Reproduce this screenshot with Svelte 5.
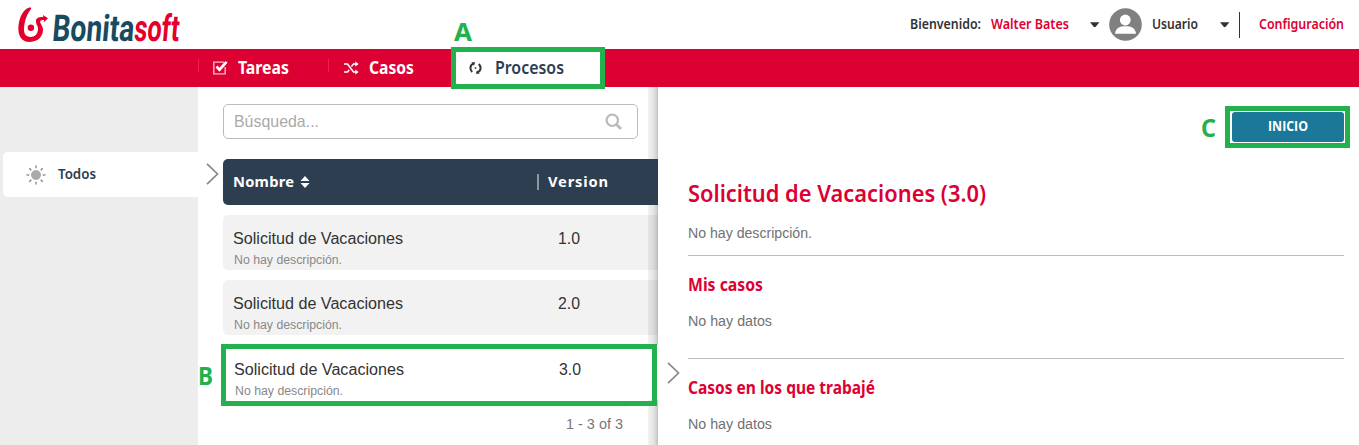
<script>
  const rows = [
    { name: 'Solicitud de Vacaciones', note: 'No hay descripción.', version: '1.0' },
    { name: 'Solicitud de Vacaciones', note: 'No hay descripción.', version: '2.0' },
    { name: 'Solicitud de Vacaciones', note: 'No hay descripción.', version: '3.0', selected: true }
  ];
  const rays = [0, 45, 90, 135, 180, 225, 270, 315];
</script>

{#snippet label(text, width, size, kind = 'sig', adjust = 'spacingAndGlyphs')}
  <svg class="label {kind}" {width} height="20"><text x="0" y="15" font-size={size} textLength={width} lengthAdjust={adjust}>{text}</text></svg>
{/snippet}

{#snippet chevron()}
  <svg class="chevron" width="13" height="22" viewBox="0 0 13 22"><path d="M1 .8 11.5 11 1 21.2" fill="none" stroke="#888" stroke-width="1.7" /></svg>
{/snippet}

{#snippet caret()}
  <svg class="caret" width="10" height="6" viewBox="0 0 10 6"><path d="M0 .3H9.4L5.7 4.8Q4.7 5.7 3.7 4.8Z" fill="#333" /></svg>
{/snippet}

<div class="page">
  <header>
    <svg class="logo" width="190" height="49" viewBox="0 0 190 49">
      <path d="M12.6 7.3C7.5 8 3.5 13 1.4 20.4C-1.2 31 1 41.6 11.2 41.9C20.2 42.1 25 36.5 25 29.6C25 25.3 21.7 23.4 22.2 21.4C22.6 19.8 24.5 20.1 26 20L25.7 22.5L30 18.2L24.9 14.9L25.3 17.1C21 16.9 17.6 18.2 17.9 21.6C18.2 25 20.5 26.2 20 30C19.4 34.6 16.3 37 12.3 36.9C5.8 36.7 5.3 31.1 6.6 23.5C7.8 17 10.3 12.3 13.2 8.7Z" fill="#e4002b" />
      <circle cx="12.9" cy="27.8" r="3.2" fill="#e4002b" />
      <g class="wordmark" transform="translate(33.5 41) skewX(-5)">
        <text x="0" y="0" font-size="37" textLength="82" lengthAdjust="spacingAndGlyphs" fill="#184a62">Bonita</text>
        <text x="82" y="0" font-size="37" textLength="45" lengthAdjust="spacingAndGlyphs" fill="#e4002b">soft</text>
      </g>
    </svg>
    <div class="user">
      {@render label('Bienvenido:', 71, 14)}
      <span class="red name">{@render label('Walter Bates', 78, 14)}</span>
      {@render caret()}
      <svg class="avatar" width="33" height="33" viewBox="0 0 33 33">
        <circle cx="16.5" cy="16.5" r="16.3" fill="#808080" />
        <circle cx="16.3" cy="12" r="5.4" fill="#fff" />
        <path d="M6 25.7C6.5 20 11 18.2 16.5 18.2S26.5 20 27 25.7Z" fill="#fff" />
      </svg>
      <span class="role">{@render label('Usuario', 46, 14)}</span>
      {@render caret()}
      <span class="divider"></span>
      <span class="red">{@render label('Configuración', 85, 14)}</span>
    </div>
  </header>

  <nav>
    <div class="tab tasks">
      <svg width="17" height="16" viewBox="0 0 17 16"><path d="M12 2.1H1.8V13.9H13.2V7" fill="none" stroke="#f8b9c7" stroke-width="1.4" /><path d="M4.5 6.5 7.5 9.7 14.6 1.8" fill="none" stroke="#fff" stroke-width="2.7" /></svg>
      {@render label('Tareas', 51, 17, 'sig bold')}
    </div>
    <div class="tab cases">
      <svg width="15" height="14" viewBox="0 0 15 14"><path d="M0 3H3.5L9.5 11H13M0 11H3.5L5.3 8.8M7.4 5.4 9.5 3H13" fill="none" stroke="#fff" stroke-width="1.5" /><path d="M11.3.4 14.7 3 11.3 5.6ZM11.3 8.4 14.7 11 11.3 13.6Z" fill="#fff" /></svg>
      {@render label('Casos', 45, 17, 'sig bold')}
    </div>
    <div class="tab active">
      <svg width="13" height="14" viewBox="0 0 13 14"><path d="M4 2.6C.6 4.6.8 8.6 3.2 11M9 11.4C12.4 9.4 12.2 5.4 9.8 3" fill="none" stroke="#333" stroke-width="2" /><path d="M2.4 1.2 6.2 1.3 5 4.8ZM10.6 12.8 6.8 12.7 8 9.2Z" fill="#333" /><circle cx="6.5" cy="7" r="1" fill="#555" /></svg>
      {@render label('Procesos', 69, 17)}
    </div>
  </nav>

  <main>
    <aside>
      <div class="filter">
        <svg width="20" height="20" viewBox="-10 -10 20 20">
          <circle r="4.6" fill="#aaa" stroke="#999" stroke-width=".6" />
          {#each rays as angle}<path d="M0-9.5V-6.7" stroke="#777" stroke-width="1.2" transform="rotate({angle})" />{/each}
        </svg>
        {@render label('Todos', 38, 14)}
      </div>
    </aside>

    <section class="list">
      <div class="side-arrow">{@render chevron()}</div>
      <div class="shade"></div>
      <div class="search">
        {@render label('Búsqueda...', 85, 16.5, 'plain')}
        <svg width="18" height="18" viewBox="0 0 18 18"><circle cx="7.3" cy="7.3" r="5.7" fill="none" stroke="#bbb" stroke-width="2.2" /><path d="M11.5 11.5 16 16" stroke="#bbb" stroke-width="2.8" /></svg>
      </div>
      <div class="thead">
        {@render label('Nombre', 61, 14.7, 'sig bold', 'spacing')}
        <svg class="sort" width="10" height="12" viewBox="0 0 10 12"><path d="M5 0 9.5 5H.5ZM5 12 9.5 7H.5Z" fill="#fff" /></svg>
        <span class="bar"></span>
        {@render label('Version', 60, 14.7, 'sig bold', 'spacing')}
      </div>
      <div class="rows">
        {#each rows as row}
          <div class="row" class:selected={row.selected}>
            <div class="texts">
              {@render label(row.name, 170, 16, 'plain')}
              <span class="note">{@render label(row.note, 108, 12, 'plain')}</span>
            </div>
            {@render label(row.version, 22, 16, 'plain')}
          </div>
        {/each}
      </div>
      <div class="count">{@render label('1 - 3 of 3', 57, 14, 'plain')}</div>
    </section>

    <section class="detail">
      <div class="detail-arrow">{@render chevron()}</div>
      <button>{@render label('INICIO', 40, 13.5, 'sig bold open')}</button>
      <h1>{@render label('Solicitud de Vacaciones (3.0)', 298, 23)}</h1>
      <p class="desc">{@render label('No hay descripción.', 124, 14, 'plain')}</p>
      <div class="block">
        <h2>{@render label('Mis casos', 75, 17, 'sig bold')}</h2>
        <p>{@render label('No hay datos', 84, 14, 'plain')}</p>
      </div>
      <div class="block">
        <h2>{@render label('Casos en los que trabajé', 187, 17, 'sig bold')}</h2>
        <p>{@render label('No hay datos', 84, 14, 'plain')}</p>
      </div>
    </section>
  </main>

  <div class="frame frame-a"></div>
  <div class="frame frame-b"></div>
  <div class="frame frame-c"></div>
  <div class="mark mark-a">{@render label('A', 18, 25, 'sig bold')}</div>
  <div class="mark mark-b">{@render label('B', 15, 25, 'sig bold')}</div>
  <div class="mark mark-c">{@render label('C', 15, 25, 'sig bold')}</div>
</div>

<style>
  :global(body) { margin: 0; }
  * { box-sizing: border-box; }
  svg { display: block; flex: none; }
  h1, h2, p { margin: 0; }
  .page { position: relative; width: 1359px; height: 445px; overflow: hidden; background: #fff; color: #333; display: flex; flex-direction: column; }
  .label { overflow: visible; fill: currentColor; }
  .sig { font-family: "Noto Sans", sans-serif; font-weight: 600; }
  .bold { font-weight: 700; }
  .open { font-family: "Open Sans", sans-serif; }
  .plain { font-family: "Liberation Sans", Arial, sans-serif; font-weight: 400; }
  .red { color: #dd0033; }

  header { height: 49px; flex: none; display: flex; justify-content: space-between; padding: 0 15px 0 18px; }
  .logo { overflow: visible; }
  .wordmark { font-family: Roboto, sans-serif; font-weight: 700; }
  .user { display: flex; align-items: center; height: 47px; }
  .name { margin: 0 21px 0 10px; }
  .avatar { margin: 2px 10px 0 9px; }
  .role { margin-right: 22px; }
  .caret { margin-top: 2px; }
  .divider { width: 1px; height: 26px; background: #333; margin: 2px 19px 0 9px; }

  nav { height: 38px; flex: none; background: #dd0033; color: #fff; display: flex; padding-left: 198px; }
  .tab { display: flex; align-items: center; position: relative; }
  .tab .label { margin-top: 2px; }
  .tasks { width: 130px; padding-left: 14px; gap: 9px; }
  .cases { width: 128px; padding-left: 16px; gap: 10px; }
  .tasks::before, .cases::before { content: ""; position: absolute; left: 0; top: 10px; width: 1px; height: 13px; background: #f01f4c; }
  .active { width: 144px; background: #fff; color: #2c3e50; padding-left: 13px; gap: 13px; }

  main { flex: 1; display: flex; }
  aside { width: 198px; background: #ededed; padding: 65px 0 0 3px; }
  .filter { height: 45px; background: #fff; border-radius: 5px 0 0 5px; display: flex; align-items: center; gap: 12px; padding-left: 23px; color: #2c3e50; }
  .filter .label { margin-top: -2px; }

  .list { width: 460px; position: relative; padding: 17px 0 0 25px; }
  .side-arrow { position: absolute; left: 8px; top: 76px; }
  .shade { position: absolute; right: 0; top: 0; bottom: 0; width: 10px; background: linear-gradient(90deg, rgba(0,0,0,.05), rgba(0,0,0,.11) 60%, rgba(0,0,0,.23)); z-index: 1; }
  .search { width: 415px; height: 35px; border: 1px solid #bbb; border-radius: 5px; display: flex; align-items: center; justify-content: space-between; padding: 0 14px 0 10px; color: #aaa; }
  .thead { position: relative; z-index: 2; height: 46px; margin-top: 20px; background: #2c3e50; border-radius: 5px 0 0 5px; color: #fff; display: flex; align-items: center; padding-left: 10px; }
  .sort { margin-left: 6px; }
  .bar { width: 2px; height: 16px; background: #8d98a3; margin: 0 9px 0 227px; }
  .rows { display: flex; flex-direction: column; gap: 10px; margin-top: 10px; }
  .row { height: 55px; background: #f2f2f2; border-radius: 5px 0 0 5px; padding: 14px 0 0 10px; display: flex; gap: 155px; }
  .selected { position: relative; z-index: 2; background: #fff; padding: 15px 0 0 11px; }
  .selected::after { content: ""; position: absolute; left: 10px; right: 30px; bottom: -8px; height: 6px; background: linear-gradient(rgba(0,0,0,.12), rgba(0,0,0,0)); }
  .note { display: block; color: #888; padding-left: 1px; }
  .count { color: #777; padding: 14px 0 0 343px; }

  .detail { width: 701px; position: relative; padding: 25px 15px 0 30px; color: #dd0033; }
  .detail-arrow { position: absolute; left: 9px; top: 275px; }
  .detail p { color: #717171; }
  button { display: flex; justify-content: center; align-items: center; width: 112px; height: 30px; margin: 0 0 0 auto; padding: 0 0 2px; border: 0; border-radius: 3px; background: #1b7898; color: #fff; }
  h1 { padding-top: 45px; }
  .desc { padding: 16px 0 12px; }
  .block { border-top: 1px solid #bbb; padding-top: 20px; height: 103px; }
  .block p { padding-top: 15px; }

  .frame { position: absolute; border: 5px solid #22b14c; z-index: 3; }
  .frame-a { left: 451px; top: 47px; width: 154px; height: 42px; }
  .frame-b { left: 221px; top: 344px; width: 436px; height: 62px; background: #fff; z-index: 1; }
  .frame-b { background: none; z-index: 3; }
  .frame-c { left: 1225px; top: 106px; width: 125px; height: 42px; }
  .mark { position: absolute; color: #22b14c; z-index: 3; }
  .mark-a { left: 454px; top: 26px; }
  .mark-b { left: 198px; top: 370px; }
  .mark-c { left: 1201px; top: 122px; }
</style>
